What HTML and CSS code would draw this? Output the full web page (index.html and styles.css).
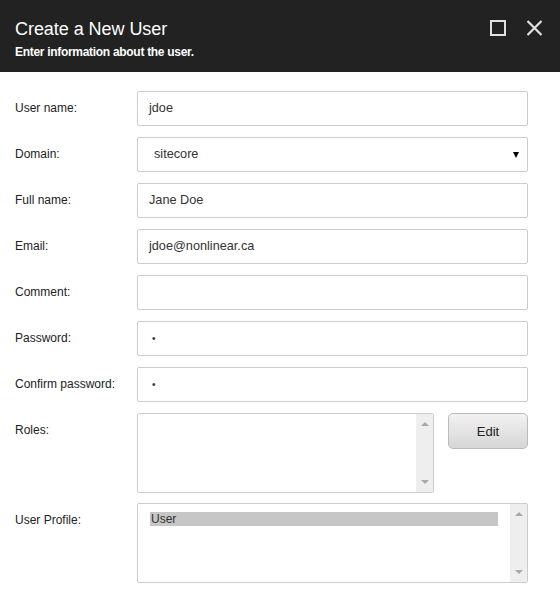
FILE: index.html
```html
<!DOCTYPE html>
<html>
<head>
<meta charset="utf-8">
<link rel="stylesheet" href="styles.css">
</head>
<body>
<div class="dialog">
  <header class="header">
    <div class="titles">
      <div class="title">Create a New User</div>
      <div class="subtitle">Enter information about the user.</div>
    </div>
    <div class="actions">
      <svg class="icon" width="16" height="16" viewBox="0 0 16 16"><rect x="1" y="1" width="14" height="14" fill="none" stroke="#e0e0e0" stroke-width="2"/></svg>
      <svg class="icon" width="17" height="16" viewBox="0 0 17 16"><path d="M1.5 1 L15.5 15 M15.5 1 L1.5 15" stroke="#e0e0e0" stroke-width="2.2" fill="none"/></svg>
    </div>
  </header>
  <main class="form">
    <div class="row"><div class="label">User name:</div><div class="field">jdoe</div></div>
    <div class="row"><div class="label">Domain:</div><div class="field select"><span>sitecore</span><span class="caret"></span></div></div>
    <div class="row"><div class="label">Full name:</div><div class="field">Jane Doe</div></div>
    <div class="row"><div class="label">Email:</div><div class="field">jdoe@nonlinear.ca</div></div>
    <div class="row"><div class="label">Comment:</div><div class="field"></div></div>
    <div class="row"><div class="label">Password:</div><div class="field pw">•</div></div>
    <div class="row"><div class="label">Confirm password:</div><div class="field pw">•</div></div>
    <div class="row tall">
      <div class="label">Roles:</div>
      <div class="roles-area">
        <div class="listbox roles"><div class="list-body"></div><div class="scrollbar"><span class="up"></span><span class="down"></span></div></div>
        <button class="btn">Edit</button>
      </div>
    </div>
    <div class="row tall profile-row">
      <div class="label">User Profile:</div>
      <div class="listbox profile"><div class="list-body"><div class="option">User</div></div><div class="scrollbar"><span class="up"></span><span class="down"></span></div></div>
    </div>
  </main>
</div>
</body>
</html>
```
FILE: styles.css
```css
* { box-sizing: border-box; }
html, body { margin: 0; padding: 0; background: #fff; }
body { font-family: "Liberation Sans", Arial, sans-serif; color: #222; width: 560px; height: 606px; overflow: hidden; }
.header { height: 72px; background: #222222; color: #fff; display: flex; justify-content: space-between; align-items: flex-start; padding: 0 17px 0 15px; }
.titles { padding-top: 18px; }
.title { font-size: 18px; line-height: 22px; letter-spacing: -0.05px; }
.subtitle { font-size: 12px; font-weight: bold; line-height: 14px; margin-top: 5px; letter-spacing: -0.3px; }
.actions { display: flex; gap: 20px; padding-top: 20px; }
.icon { display: block; }
.form { padding: 19px 32px 0 15px; display: flex; flex-direction: column; gap: 11px; }
.row { display: flex; height: 35px; }
.row.tall { height: 80px; }
.profile-row { margin-top: -1px; }
.label { width: 122px; flex: none; font-size: 12px; line-height: 35px; color: #222; }
.field { flex: 1; border: 1px solid #cccccc; border-radius: 2px; font-size: 12.7px; line-height: 33px; padding: 0 11px; color: #333; }
.field.select { display: flex; justify-content: space-between; align-items: center; padding: 0 8px 0 16px; }
.caret { width: 0; height: 0; border-left: 3.5px solid transparent; border-right: 3.5px solid transparent; border-top: 6px solid #000; margin-top: 1px; }
.field.pw { font-size: 10px; padding-left: 14px; }
.roles-area { flex: 1; display: flex; gap: 14px; align-items: flex-start; }
.listbox { border: 1px solid #cccccc; border-radius: 2px; display: flex; height: 80px; }
.roles { width: 297px; }
.profile { flex: 1; }
.list-body { flex: 1; padding: 8px 12px 0 12px; }
.option { background: #c6c6c6; font-size: 12px; line-height: 14px; color: #333; padding-left: 1px; }
.scrollbar { width: 17px; background: #eeeeee; position: relative; border-radius: 0 2px 2px 0; }
.up, .down { position: absolute; left: 5px; width: 0; height: 0; border-left: 4px solid transparent; border-right: 4px solid transparent; }
.up { top: 8px; border-bottom: 4px solid #a8a8a8; }
.down { bottom: 8px; border-top: 4px solid #a8a8a8; }
.btn { width: 80px; height: 36px; border: 1px solid #bbbbbb; border-radius: 5px; background: linear-gradient(#f2f2f2, #d6d6d6); font-family: "Liberation Sans", Arial, sans-serif; font-size: 13px; color: #222; padding: 0; }
```
